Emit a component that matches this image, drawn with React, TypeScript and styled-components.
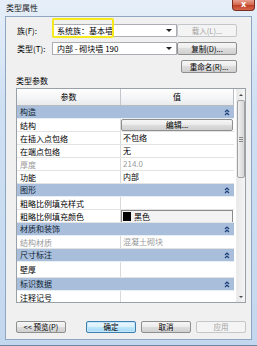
import React from 'react';
import styled, { createGlobalStyle, css } from 'styled-components';

const GlobalStyle = createGlobalStyle`
  html, body { margin: 0; padding: 0; background: #ffffff; }
  body {
    font-family: "Noto Sans CJK SC", "Noto Sans", sans-serif;
    font-size: 8px;
    color: #000;
  }
  * { box-sizing: border-box; }
`;

const Window = styled.div`
  width: 257px;
  height: 346px;
  display: flex;
  flex-direction: column;
  padding: 0 5px 5px 5px;
  background: linear-gradient(180deg, #e6eff9 0%, #cfe0f3 30%, #c3d7ee 100%);
  border-bottom: 1px solid #6f84a0;
  overflow: hidden;
`;

const TitleBar = styled.div`
  height: 16px;
  flex-shrink: 0;
  display: flex;
  align-items: flex-start;
`;

const Title = styled.div`
  padding: 3px 0 0 1px;
  line-height: 10px;
  font-size: 8px;
  color: #1a1a1a;
`;

const CloseButton = styled.div`
  margin-left: auto;
  margin-right: -3px;
  width: 23px;
  height: 11px;
  border: 1px solid #7b2c1f;
  border-top: none;
  border-radius: 0 0 4px 4px;
  background: linear-gradient(180deg, #e9a08f 0%, #d46a52 45%, #c0402a 55%, #d66a4c 100%);
  color: #fff;
  font-family: "DejaVu Sans", sans-serif;
  font-weight: bold;
  font-size: 8px;
  line-height: 10px;
  text-align: center;
`;

const Client = styled.div`
  flex: 1;
  min-height: 0;
  display: flex;
  flex-direction: column;
  background: #f0f0f0;
  border: 1px solid #8fa6c3;
  padding: 7px 5px 6px 10px;
`;

const FormGrid = styled.div`
  display: grid;
  grid-template-columns: 36px 125px 60px;
  column-gap: 0;
  grid-auto-rows: 13px;
  row-gap: 5px;
  position: relative;
  flex-shrink: 0;
`;

const Label = styled.div`
  line-height: 13px;
  padding-left: 1px;
`;

const Combo = styled.div`
  display: flex;
  align-items: center;
  height: 13px;
  border: 1px solid #abadb3;
  background: #fff;
  padding-left: 4px;
  line-height: 11px;
`;

const ComboText = styled.span`
  flex: 1;
  white-space: nowrap;
`;

const ComboArrow = styled.span`
  width: 0;
  height: 0;
  margin-right: 4px;
  border-left: 3px solid transparent;
  border-right: 3px solid transparent;
  border-top: 3px solid #222;
`;

const Highlight = styled.div`
  position: absolute;
  left: 36px;
  top: -6px;
  width: 62px;
  height: 20px;
  border: 2px solid #f6ea1c;
  border-radius: 2px;
  pointer-events: none;
`;

const WinButton = styled.div<{ $disabled?: boolean; $default?: boolean; $w?: number }>`
  width: ${(p) => p.$w ?? 60}px;
  justify-self: end;
  margin-left: 8px;
  height: 13px;
  border: 1px solid #8e8f8f;
  border-radius: 2px;
  background: linear-gradient(180deg, #f6f6f6 0%, #ebebeb 49%, #dddddd 50%, #d0d0d0 100%);
  line-height: 11px;
  text-align: center;
  white-space: nowrap;
  font-size: 7.5px;
  ${(p) =>
    p.$disabled &&
    css`
      border-color: #c4c7ca;
      background: #f4f4f4;
      color: #a0a0a0;
    `}
  ${(p) =>
    p.$default &&
    css`
      border-color: #3c7fb1;
      background: linear-gradient(180deg, #eaf6fd 0%, #d9f0fc 49%, #bee6fd 50%, #a7d9f5 100%);
      box-shadow: inset 0 0 0 1px #c5e6fb;
    `}
`;

const SectionLabel = styled.div`
  margin: 3px 0 2px 0;
  line-height: 10px;
  flex-shrink: 0;
`;

const Table = styled.div`
  flex: 1;
  min-height: 0;
  display: flex;
  gap: 2px;
  border: 1px solid #9aa0a8;
  background: #fff;
  overflow: hidden;
`;

const GridArea = styled.div`
  flex: 1;
  display: flex;
  flex-direction: column;
  overflow: hidden;
`;

const HeaderRow = styled.div`
  display: grid;
  grid-template-columns: 104px 1fr;
  height: 17px;
  flex-shrink: 0;
  background: linear-gradient(180deg, #ffffff 0%, #f3f4f6 60%, #e9eaec 100%);
  border-bottom: 1px solid #b8bcc2;
  border-right: 1px solid #b8bcc2;
`;

const HeaderCell = styled.div`
  line-height: 16px;
  text-align: center;
  border-right: 1px solid #c4c7cc;
  &:last-child { border-right: none; }
`;

const Row = styled.div<{ $h?: number }>`
  display: grid;
  grid-template-columns: 104px 1fr;
  height: ${(p) => p.$h ?? 13}px;
  flex-shrink: 0;
  border-bottom: 1px solid #e3e3e3;
`;

const ParamCell = styled.div<{ $muted?: boolean }>`
  display: flex;
  align-items: center;
  padding-left: 3px;
  border-right: 1px solid #d9d9d9;
  white-space: nowrap;
  overflow: hidden;
  color: ${(p) => (p.$muted ? '#9a9a9a' : '#000')};
`;

const ValueCell = styled.div<{ $muted?: boolean }>`
  line-height: 12px;
  padding-left: 2px;
  white-space: nowrap;
  overflow: hidden;
  color: ${(p) => (p.$muted ? '#9a9a9a' : '#000')};
  display: flex;
  align-items: center;
`;

const GroupRow = styled.div`
  display: flex;
  align-items: center;
  height: 13px;
  flex-shrink: 0;
  padding: 0 4px 0 3px;
  background: #a9bedb;
  border-bottom: 1px solid #e8eef6;
  line-height: 12px;
  color: #0e1e33;
`;

const GroupText = styled.span`
  flex: 1;
`;

const CellButton = styled.div`
  flex: 1;
  height: 12px;
  margin-left: -2px;
  margin-right: 1px;
  border: 1px solid #8e8f8f;
  border-radius: 2px;
  background: linear-gradient(180deg, #f6f6f6 0%, #ebebeb 49%, #dddddd 50%, #d0d0d0 100%);
  text-align: center;
  line-height: 10px;
`;

const ColorCell = styled.div`
  flex: 1;
  height: 13px;
  margin-left: -2px;
  margin-right: 1px;
  display: flex;
  align-items: center;
  gap: 3px;
  border: 1px solid #8a8a8a;
  background: #f3f3f3;
  padding-left: 1px;
  line-height: 11px;
`;

const Swatch = styled.span`
  width: 8px;
  height: 9px;
  background: #000;
`;

const ScrollBar = styled.div`
  width: 9px;
  flex-shrink: 0;
  display: flex;
  flex-direction: column;
  background: linear-gradient(90deg, #e9e9e9, #f5f5f5);
  border-left: 1px solid #ececec;
`;

const ScrollArrow = styled.div<{ $down?: boolean }>`
  height: 11px;
  flex-shrink: 0;
  display: flex;
  align-items: center;
  justify-content: center;
  &::after {
    content: '';
    width: 0;
    height: 0;
    border-left: 2.5px solid transparent;
    border-right: 2.5px solid transparent;
    ${(p) =>
      p.$down
        ? css`border-top: 2.5px solid #4d4d4d;`
        : css`border-bottom: 2.5px solid #4d4d4d;`}
  }
`;

const Track = styled.div`
  flex: 1;
  display: flex;
  flex-direction: column;
`;

const Thumb = styled.div`
  height: 78px;
  border: 1px solid #a3a3a3;
  border-radius: 2px;
  background: linear-gradient(90deg, #f1f1f1 0%, #e4e4e4 50%, #d6d6d6 100%);
  display: flex;
  flex-direction: column;
  align-items: center;
  justify-content: center;
  gap: 1px;
`;

const Grip = styled.span`
  width: 4px;
  height: 1px;
  background: #888;
`;

const ButtonBar = styled.div`
  margin-top: 18px;
  display: flex;
  align-items: center;
  flex-shrink: 0;
`;

const ButtonGroup = styled.div`
  margin-left: auto;
  display: flex;
  gap: 5px;
`;

const BarButton = styled(WinButton)`
  margin-left: 0;
  height: 12px;
  line-height: 10px;
`;

const CollapseIcon = () => (
  <svg width="6" height="7" viewBox="0 0 6 7">
    <path d="M1 3 L3 1 L5 3 M1 6 L3 4 L5 6" stroke="#1b3e7a" strokeWidth="1.2" fill="none" />
  </svg>
);

type Entry =
  | { kind: 'group'; label: string }
  | { kind: 'row'; label: string; value?: string; muted?: boolean; button?: string; swatch?: boolean; h?: number };

const rows: Entry[] = [
  { kind: 'group', label: '构造' },
  { kind: 'row', label: '结构', button: '编辑...' },
  { kind: 'row', label: '在插入点包络', value: '不包络' },
  { kind: 'row', label: '在端点包络', value: '无' },
  { kind: 'row', label: '厚度', value: '214.0', muted: true },
  { kind: 'row', label: '功能', value: '内部' },
  { kind: 'group', label: '图形' },
  { kind: 'row', label: '粗略比例填充样式', value: '' },
  { kind: 'row', label: '粗略比例填充颜色', value: '黑色', swatch: true },
  { kind: 'group', label: '材质和装饰' },
  { kind: 'row', label: '结构材质', value: '混凝土砌块', muted: true },
  { kind: 'group', label: '尺寸标注' },
  { kind: 'row', label: '壁厚', value: '', h: 16 },
  { kind: 'group', label: '标识数据' },
  { kind: 'row', label: '注释记号', value: '' },
];

export default function App() {
  return (
    <>
      <GlobalStyle />
      <Window>
        <TitleBar>
          <Title>类型属性</Title>
          <CloseButton>x</CloseButton>
        </TitleBar>
        <Client>
          <FormGrid>
            <Label>族(F):</Label>
            <Combo>
              <ComboText>系统族：基本墙</ComboText>
              <ComboArrow />
            </Combo>
            <WinButton $disabled>载入(L)...</WinButton>
            <Label>类型(T):</Label>
            <Combo>
              <ComboText>内部 - 砌块墙 190</ComboText>
              <ComboArrow />
            </Combo>
            <WinButton>复制(D)...</WinButton>
            <span />
            <span />
            <WinButton $w={56}>重命名(R)...</WinButton>
            <Highlight />
          </FormGrid>
          <SectionLabel>类型参数</SectionLabel>
          <Table>
            <GridArea>
              <HeaderRow>
                <HeaderCell>参数</HeaderCell>
                <HeaderCell>值</HeaderCell>
              </HeaderRow>
              {rows.map((r, i) =>
                r.kind === 'group' ? (
                  <GroupRow key={i}>
                    <GroupText>{r.label}</GroupText>
                    <CollapseIcon />
                  </GroupRow>
                ) : (
                  <Row key={i} $h={r.h}>
                    <ParamCell $muted={r.muted}>{r.label}</ParamCell>
                    <ValueCell $muted={r.muted}>
                      {r.button ? (
                        <CellButton>{r.button}</CellButton>
                      ) : r.swatch ? (
                        <ColorCell>
                          <Swatch />
                          {r.value}
                        </ColorCell>
                      ) : (
                        r.value
                      )}
                    </ValueCell>
                  </Row>
                )
              )}
            </GridArea>
            <ScrollBar>
              <ScrollArrow />
              <Track>
                <Thumb>
                  <Grip />
                  <Grip />
                  <Grip />
                </Thumb>
              </Track>
              <ScrollArrow $down />
            </ScrollBar>
          </Table>
          <ButtonBar>
            <BarButton $w={50}>&lt;&lt; 预览(P)</BarButton>
            <ButtonGroup>
              <BarButton $w={50} $default>确定</BarButton>
              <BarButton $w={50}>取消</BarButton>
              <BarButton $w={50} $disabled>应用</BarButton>
            </ButtonGroup>
          </ButtonBar>
        </Client>
      </Window>
    </>
  );
}
